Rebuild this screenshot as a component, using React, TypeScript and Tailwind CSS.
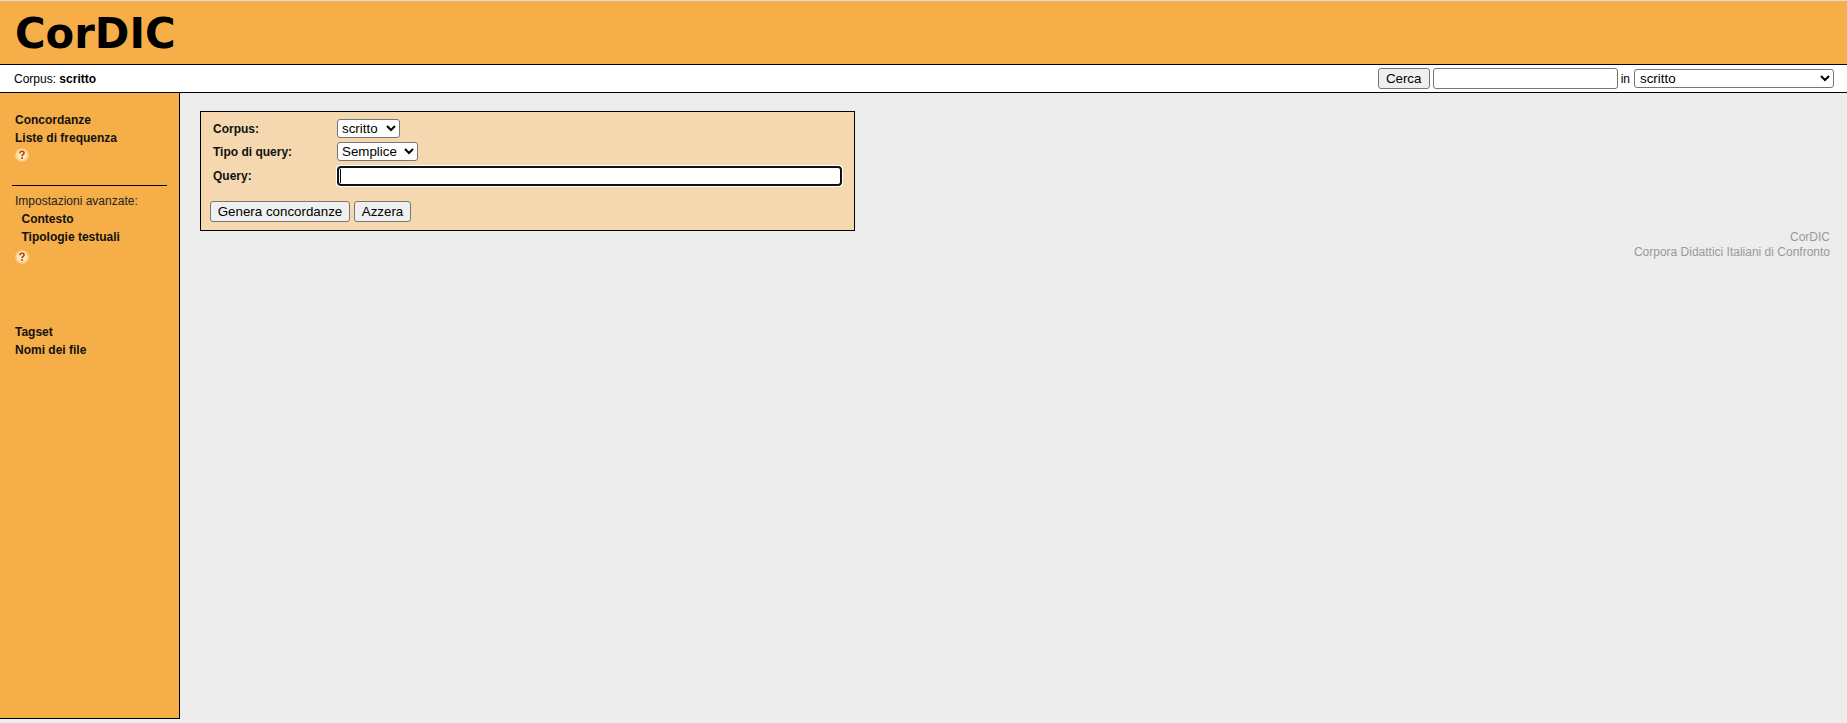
function Help() {
  return (
    <svg width="14" height="14" viewBox="0 0 14 14" className="block">
      <circle cx="7" cy="7" r="6.8" fill="#fbd38a" />
      <circle cx="7" cy="7" r="5" fill="#fde8c0" />
      <path d="M4.9 5.3C5 3.8 6 3.2 7 3.2c1.2 0 2.1.8 2.1 1.8 0 1.5-2 1.5-2 3.2" fill="none" stroke="#c43c00" strokeWidth="1.6" />
      <rect x="6.2" y="9.2" width="1.7" height="1.7" fill="#c43c00" />
    </svg>
  );
}

export default function App() {
  const sans = "font-['Liberation_Sans',Arial,sans-serif]";
  const control = "border border-[#767676] rounded-[3px] bg-white text-[13.33px] text-black";
  const button = "border border-[#767676] rounded-[3px] bg-[#efefef] text-[13.33px] text-black";
  const link = "h-[18px] leading-[18px] font-bold text-[#111]";
  return (
    <div className={`${sans} h-[723px] w-[1847px] overflow-hidden bg-[#ededed] text-[12px] text-black`}>
      <div className="h-px bg-[#dddddd]" />
      <header className="h-[64px] border-b border-black bg-[#f6ae48] pl-[15px]">
        <div className="origin-left scale-y-[1.04] font-['DejaVu_Sans',sans-serif] text-[41.7px] leading-[64px] font-bold text-black">CorDIC</div>
      </header>
      <div className="flex h-[28px] items-center justify-between border-b border-black bg-white pr-[13px] pl-[14px]">
        <div>Corpus: <b>scritto</b></div>
        <div className="flex items-center">
          <button className={`${button} h-[21px] w-[52px]`}>Cerca</button>
          <input className={`${control} ml-[3px] h-[21px] w-[185px]`} />
          <span className="mr-[4px] ml-[3px]">in</span>
          <select className={`${control} h-[19px] w-[200px] pl-[1px]`}>
            <option>scritto</option>
          </select>
        </div>
      </div>
      <div className="flex items-start">
        <aside className="h-[626px] w-[180px] shrink-0 border-r border-b border-black bg-[#f6ae48] pt-[18px] text-[#222]">
          <div className="pl-[15px]">
            <div className={link}>Concordanze</div>
            <div className={link}>Liste di frequenza</div>
            <div className="mt-px"><Help /></div>
          </div>
          <div className="mt-[23px] mr-[12px] ml-[12px] h-px bg-black" />
          <div className="mt-[6px] pl-[15px]">
            <div className="h-[18px] leading-[18px]">Impostazioni avanzate:</div>
            <div className={`${link} pl-[6.5px]`}>Contesto</div>
            <div className={`${link} pl-[6.5px]`}>Tipologie testuali</div>
            <div className="mt-[4px]"><Help /></div>
            <div className={`${link} mt-[59px]`}>Tagset</div>
            <div className={link}>Nomi dei file</div>
          </div>
        </aside>
        <main className="min-w-0 flex-1 pt-[18px] pr-[17px] pl-[20px]">
          <div className="h-[120px] w-[655px] border border-black bg-[#f5d8b0] pt-[7px] pl-[9px]">
            <div className="grid grid-cols-[124px_1fr] items-center pl-[3px] font-bold text-[#111]">
              <div>Corpus:</div>
              <select className={`${control} h-[19px] w-[63px] font-normal`}>
                <option>scritto</option>
              </select>
              <div className="mt-[4px]">Tipo di query:</div>
              <select className={`${control} mt-[4px] h-[19px] w-[81px] font-normal`}>
                <option>Semplice</option>
              </select>
              <div className="mt-[5px]">Query:</div>
              <div className="relative mt-[5px] h-[20px] w-[505px]">
                <input autoFocus className={`${control} h-[20px] w-[505px] caret-transparent`} />
                <div className="absolute top-[3px] left-[3px] h-[14px] w-px bg-black" />
              </div>
            </div>
            <div className="mt-[15px] flex gap-[4px]">
              <button className={`${button} h-[21px] w-[140px]`}>Genera concordanze</button>
              <button className={`${button} h-[21px] w-[57px]`}>Azzera</button>
            </div>
          </div>
          <div className="-mt-[1px] text-right leading-[15px] text-[#999]">
            <div>CorDIC</div>
            <div>Corpora Didattici Italiani di Confronto</div>
          </div>
        </main>
      </div>
    </div>
  );
}
